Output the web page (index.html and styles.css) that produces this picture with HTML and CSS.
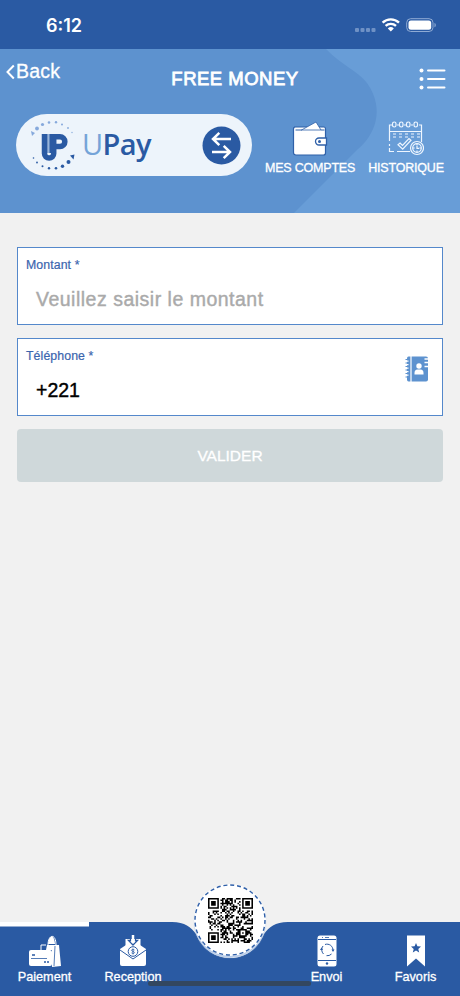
FILE: index.html
```html
<!DOCTYPE html>
<html lang="fr">
<head>
    <meta charset="UTF-8">
    <meta name="viewport" content="width=device-width, initial-scale=1.0">
    <title>Free Money</title>
    <link rel="stylesheet" href="styles.css">
</head>
<body>
    <div class="app">
        <!-- Status bar -->
        <div class="status-bar">
            <span class="time">6:12</span>
            <svg class="status-icons" width="84" height="18" viewBox="0 0 84 18">
                <g fill="#6f91c5">
                    <rect x="1" y="12" width="4" height="4" rx="1"/>
                    <rect x="6.500" y="12" width="4" height="4" rx="1"/>
                    <rect x="12" y="12" width="4" height="4" rx="1"/>
                    <rect x="17.500" y="12" width="4" height="4" rx="1"/>
                </g>
                <g fill="none" stroke="#fff" stroke-width="2.400">
                    <path d="M28.600 6.600a12 12 0 0 1 16.400 0"/>
                    <path d="M31.600 9.900a7.700 7.700 0 0 1 10.400 0"/>
                </g>
                <path d="M33.800 12.400a4.500 4.500 0 0 1 6 0l-3 3.200z" fill="#fff"/>
                <rect x="52.700" y="2.700" width="26.300" height="12.800" rx="4" fill="none" stroke="#8fabd4"/>
                <rect x="54.500" y="4.500" width="22.700" height="9.200" rx="2.500" fill="#fff"/>
                <path d="M80.500 7v4.300c1.700-.6 1.700-3.700 0-4.300z" fill="#8fabd4"/>
            </svg>
        </div>

        <!-- Header -->
        <header class="header">
            <svg class="header-shape" width="460" height="164" viewBox="0 0 460 164">
                <path d="M326 0C340 15 358 22 367 34C386 61 374 87 358 100L294 164H460V0z" fill="#689dd7"/>
            </svg>
            <div class="title-row">
                <a class="back">
                    <svg width="9" height="16" viewBox="0 0 9 16"><path d="M7.800 1.500L1.500 8l6.300 6.500" fill="none" stroke="#fff" stroke-width="2"/></svg>
                    <span>Back</span>
                </a>
                <h1>FREE MONEY</h1>
                <svg class="menu" width="28" height="22" viewBox="0 0 28 22">
                    <g fill="#fff"><circle cx="2.500" cy="2.500" r="2"/><circle cx="2.500" cy="11" r="2"/><circle cx="2.500" cy="19.500" r="2"/></g>
                    <path d="M9 2.500h16.500M9 11h16.500M9 19.500h16.500" stroke="#fff" stroke-width="2" stroke-linecap="round"/>
                </svg>
            </div>

            <div class="actions">
                <div class="wallet">
                    <svg class="logo" width="48" height="54" viewBox="0 0 48 54">
                        <g fill="#86a9dc">
                            <path d="M1 13l1 5 3-3z"/>
                            <circle cx="7" cy="10.500" r="1.900"/><circle cx="12.500" cy="6.500" r="1.600"/>
                            <circle cx="19" cy="4.500" r="1.300"/><circle cx="26" cy="4.300" r="1.200"/>
                            <circle cx="32" cy="6.500" r="1"/><circle cx="38" cy="10" r=".9"/><circle cx="42" cy="14.500" r=".7"/>
                        </g>
                        <g fill="#2a5aa3">
                            <path d="M44.500 36.500l-1 5-3.500-4z"/>
                            <circle cx="38.500" cy="44" r="2"/><circle cx="32.500" cy="48.200" r="1.700"/>
                            <circle cx="26" cy="50.200" r="1.300"/><circle cx="19" cy="50.200" r="1.200"/>
                            <circle cx="12.500" cy="48.200" r="1"/><circle cx="7" cy="44.500" r=".9"/><circle cx="3.500" cy="40" r=".8"/>
                        </g>
                        <path d="M14.500 16v19.500a4.600 4.600 0 0 0 9.200 0V18.800H30a4.700 4.700 0 0 1 0 9.700h-5" fill="none" stroke="#2a5aa3" stroke-width="5.500"/>
                        <path d="M17.500 16h6v19h-6z" fill="#2a5aa3"/>
                        <path d="M18.800 16v19" stroke="#b5cce9" stroke-width="1.200"/>
                    </svg>
                    <span class="brand"><span class="brand-u">U</span>Pay</span>
                    <svg class="swap" width="39" height="39" viewBox="0 0 39 39">
                        <circle cx="19.500" cy="19.500" r="19" fill="#2a5aa3"/>
                        <path d="M29 13H11.500M17.300 6.800L11 13l6.300 6.200M10 26h17.500M21.700 19.800L28 26l-6.300 6.200" fill="none" stroke="#fff" stroke-width="2.500"/>
                    </svg>
                </div>
                <div class="action accounts">
                    <svg width="36" height="36" viewBox="0 0 36 36">
                        <path d="M2 6h30q1.500 0 1.500 2v24q0 2-2 2H4q-2.500 0-2.500-2.500V8q0-2 2-2z" fill="#fff" stroke="#2f60a8" stroke-width="1.200"/>
                        <path d="M9.500 9L24 1l5 8z" fill="#fff" stroke="#2f60a8" stroke-width=".8"/>
                        <path d="M3.500 9h6.500M29 9h3.500" stroke="#2f60a8" stroke-width="1"/>
                        <path d="M34.500 17v7H27a3.500 3.500 0 0 1 0-7z" fill="#fff" stroke="#2f60a8" stroke-width="1.300"/>
                        <circle cx="27.500" cy="20.500" r="1.500" fill="#2f60a8"/>
                    </svg>
                    <span>MES COMPTES</span>
                </div>
                <div class="action history">
                    <svg width="36" height="36" viewBox="0 0 36 36" fill="none" stroke="#eef6ff" stroke-width="1.200">
                        <path d="M4 4H1.500v16M1.500 23v2M1.500 27v3.500H6M9 30.500h13M31 4h2.500v17M1.500 10.500h32M9 4h2M16 4h2M23 4h2"/>
                        <rect x="4.500" y="1" width="3.500" height="5" rx="1.700"/><rect x="11.500" y="1" width="3.500" height="5" rx="1.700"/>
                        <rect x="18.500" y="1" width="3.500" height="5" rx="1.700"/><rect x="26" y="1" width="3.500" height="5" rx="1.700"/>
                        <path d="M5 13h27M5 16h27" stroke-dasharray="3 3"/>
                        <path d="M12 22l2.500 2.500 6.500-7 2 1.700-8.300 9-4.700-4.500z"/>
                        <circle cx="29" cy="27" r="6.500" fill="#689dd7"/><circle cx="29" cy="27" r="4.300"/>
                        <path d="M29 22.500v2M29 29.500v2M24.700 27h2M31.300 27h2M29 25v2.300h2"/>
                    </svg>
                    <span>HISTORIQUE</span>
                </div>
            </div>
        </header>

        <!-- Form -->
        <main class="form">
            <div class="field">
                <label>Montant *</label>
                <div class="value placeholder">Veuillez saisir le montant</div>
            </div>
            <div class="field">
                <label>Téléphone *</label>
                <div class="value">+221</div>
                <svg class="contacts" width="24" height="26" viewBox="0 0 24 26">
                    <path d="M3.500.5H21q2 0 2 2v21q0 2-2 2H3.500q-1.500 0-1.500-2v-21q0-2 1.500-2z" fill="#5d92cf"/>
                    <path d="M6 0v26" stroke="#fff" stroke-width="1.200"/>
                    <path d="M.5 3.500H3M.5 7H3M.5 10.500H3M.5 14H3M.5 17.500H3M.5 21H3" stroke="#5d92cf" stroke-width="1.200"/>
                    <path d="M1.500 5.200h2M1.500 8.700h2M1.500 12.200h2M1.500 15.700h2M1.500 19.200h2" stroke="#fff" stroke-width="1.200"/>
                    <circle cx="14" cy="10" r="2.700" fill="#fff"/>
                    <path d="M9.500 18.500v-1.500q0-3.500 3-3.500h3q3 0 3 3.500v1.500z" fill="#fff"/>
                    <path d="M19.500 3h4.500M19.500 6.500h4.500M19.500 10.500h4.500" stroke="#fff" stroke-width="1.300"/>
                </svg>
            </div>
            <button class="submit" disabled>VALIDER</button>
        </main>

        <!-- Bottom tabs -->
        <nav class="tabs">
            <svg class="tabs-bg" width="460" height="74" viewBox="0 0 460 74">
                <path d="M0 0H172C185 0 191 5 196 12C209 44 251 44 264 12C269 5 275 0 288 0H460V74H0z" fill="#2a5aa3"/>
                <path d="M0 0h89v4.500H0z" fill="#fff"/>
            </svg>
            <div class="tab">
                <svg width="34" height="32" viewBox="0 0 34 32">
                    <path d="M13 15v-5h5M20 10c0-11 8-12 8 0" fill="none" stroke="#fff" stroke-width="1"/>
                    <path d="M20 9c1-9 6-11 7 0z" fill="#fff"/>
                    <path d="M19 10h12l2 21-9 1V15h-6z" fill="#fff"/>
                    <path d="M27 11l-1 20" stroke="#2a5aa3" stroke-width=".8"/>
                    <rect x="1" y="15" width="23" height="16" rx="2" fill="#fff"/>
                    <path d="M4 20h3M16 27h2M19 27h2" stroke="#2a5aa3" stroke-width="1.700"/>
                    <path d="M3 23.500h16" stroke="#2a5aa3" stroke-width=".8"/>
                </svg>
                <span>Paiement</span>
            </div>
            <div class="tab">
                <svg width="28" height="32" viewBox="0 0 28 32">
                    <path d="M1 14l6-4h14l6 4v15q0 2-2 2H3q-2 0-2-2z" fill="#fff"/>
                    <path d="M6.500 4h15v18h-15z" fill="#fff"/>
                    <path d="M1 15l13 9 13-9" fill="none" stroke="#2a5aa3" stroke-width="1"/>
                    <circle cx="14" cy="16.500" r="4.800" fill="#fff" stroke="#2a5aa3"/>
                    <path d="M15.500 15q-3-1.500-3 .2c0 1.500 3 1 3 2.500q0 1.500-3 .2M14 13.500v6" fill="none" stroke="#2a5aa3" stroke-width=".8"/>
                    <path d="M11.500 3.500v2h-2L14 10l4.500-4.500h-2v-2" fill="none" stroke="#2a5aa3" stroke-width="1.300"/>
                    <path d="M14 0v8" fill="none" stroke="#fff" stroke-width="2.500"/>
                </svg>
                <span>Reception</span>
            </div>
            <div class="tab-gap"></div>
            <div class="tab">
                <svg width="20" height="32" viewBox="0 0 20 32">
                    <rect x=".5" y=".5" width="19" height="31" rx="2.500" fill="#fff"/>
                    <path d="M1 4.500h18M1 25.500h18" stroke="#2a5aa3" stroke-width="1"/>
                    <path d="M5 2.500h1M8 2.500h4" stroke="#2a5aa3" stroke-width=".8"/>
                    <path d="M8 9.500a6 6 0 0 1 8 6M14.500 19a6 6 0 0 1-5 1.700M6.500 19a6 6 0 0 1-.5-8" fill="none" stroke="#2a5aa3" stroke-width="1"/>
                    <path d="M14.500 14.500h3L16 17zM3 15h3l-1.500-2.500z" fill="#2a5aa3"/>
                    <circle cx="10" cy="28.500" r="1.200" fill="#2a5aa3"/>
                </svg>
                <span>Envoi</span>
            </div>
            <div class="tab">
                <svg width="18" height="32" viewBox="0 0 18 32">
                    <path d="M0 .5h18v31l-9-8-9 8z" fill="#fff"/>
                    <path d="M9 8l1.400 3.300 3.600.3-2.700 2.300.9 3.600L9 15.600l-3.200 1.900.9-3.600L4 11.600l3.600-.3z" fill="#2a5aa3"/>
                </svg>
                <span>Favoris</span>
            </div>
            <div class="qr-button">
                <svg class="qr-ring" width="72" height="72" viewBox="0 0 72 72">
                    <circle cx="36" cy="36" r="35" fill="none" stroke="#2f5fa8" stroke-width="1.400" stroke-dasharray="4 2.871"/>
                </svg>
                <svg id="qr" width="45" height="45" viewBox="0 0 29 29"></svg>
            </div>
            <div class="home-bar"></div>
        </nav>
    </div>

    <script src="script.js"></script>
</body>
</html>
```

FILE: styles.css
```css
/* General Styles */
* {
    box-sizing: border-box;
}
body {
    margin: 0;
    font-family: 'Liberation Sans', Arial, sans-serif;
    background: #f1f1f1;
    overflow: hidden;
}
svg {
    display: block;
    flex-shrink: 0;
}
.app {
    width: 460px;
    height: 996px;
    display: flex;
    flex-direction: column;
}

/* Status bar */
.status-bar {
    height: 49px;
    background: #2a5aa3;
    display: flex;
    justify-content: space-between;
    padding: 15px 22px 0 46px;
    color: #fff;
}
.time {
    font-family: Inter, sans-serif;
    font-size: 18px;
    font-weight: 600;
    line-height: 22px;
}
.status-icons {
    margin-top: 1px;
}

/* Header */
.header {
    position: relative;
    height: 164px;
    background: #5d92cf;
    color: #fff;
}
.header-shape {
    position: absolute;
    top: 0;
    left: 0;
}
.title-row {
    position: relative;
    display: grid;
    grid-template-columns: 130px 1fr 113px;
    height: 65px;
    padding: 0 13px 0 6px;
}
.back {
    display: flex;
    align-items: center;
    height: 23px;
    margin-top: 11px;
    font-size: 19.5px;
    letter-spacing: 0.2px;
    -webkit-text-stroke: 0.3px #fff;
}
.back span {
    margin-left: 1px;
}
h1 {
    margin: 18px 0 0;
    font-size: 18.5px;
    font-weight: normal;
    line-height: 23px;
    letter-spacing: 0.5px;
    text-align: center;
    white-space: nowrap;
    -webkit-text-stroke: 0.8px #fff;
}
.menu {
    justify-self: end;
    margin-top: 19px;
}
.actions {
    position: relative;
    display: flex;
    padding-left: 16px;
}
.wallet {
    display: flex;
    align-items: center;
    width: 236px;
    height: 62px;
    border-radius: 31px;
    background: #edf4fb;
    padding: 0 11px 0 14px;
}
.brand {
    font-family: 'Open Sans', sans-serif;
    font-size: 29px;
    font-weight: 600;
    line-height: 40px;
    letter-spacing: -0.6px;
    color: #2a5aa3;
    margin: -2px 0 0 4px;
}
.brand-u {
    font-weight: 400;
    color: #75a4d8;
}
.swap {
    margin-left: auto;
}
.action {
    display: flex;
    flex-direction: column;
    align-items: center;
    gap: 4px;
    padding-top: 7px;
    font-size: 12.5px;
    line-height: 15px;
    letter-spacing: -0.2px;
    white-space: nowrap;
    -webkit-text-stroke: 0.3px #fff;
}
.accounts {
    width: 90px;
    margin-left: 13px;
}
.history {
    width: 76px;
    margin-left: 13px;
}

/* Form */
.form {
    flex: 1;
    display: flex;
    flex-direction: column;
    gap: 13px;
    padding: 34px 17px 0;
}
.field {
    position: relative;
    height: 78px;
    background: #fff;
    border: 1px solid #5488cb;
    padding: 9px 8px 0;
}
.field label {
    display: block;
    font-size: 12.3px;
    line-height: 16px;
    letter-spacing: 0.1px;
    color: #3a65ae;
    -webkit-text-stroke: 0.2px #3a65ae;
}
.value {
    margin: 14px 0 0 10px;
    font-size: 19.5px;
    line-height: 24px;
    color: #000;
    -webkit-text-stroke: 0.4px;
}
.placeholder {
    color: #aaa;
    letter-spacing: 0.5px;
}
.contacts {
    position: absolute;
    top: 17px;
    right: 13px;
}
.submit {
    height: 53px;
    border: none;
    border-radius: 4px;
    background: #cfd8da;
    color: #fff;
    font-family: inherit;
    font-size: 15.5px;
    -webkit-text-stroke: 0.3px #fff;
}

/* Bottom tabs */
.tabs {
    position: relative;
    height: 74px;
    display: grid;
    grid-template-columns: 89px 88px 105px 89px 89px;
    color: #fff;
}
.tabs-bg {
    position: absolute;
    top: 0;
    left: 0;
}
.tab {
    position: relative;
    display: flex;
    flex-direction: column;
    align-items: center;
    padding-top: 13px;
    gap: 3px;
    font-size: 12.7px;
    line-height: 15px;
    -webkit-text-stroke: 0.3px #fff;
}
.qr-button {
    position: absolute;
    top: -38px;
    left: 194px;
    width: 72px;
    height: 72px;
    display: flex;
    align-items: center;
    justify-content: center;
    border-radius: 50%;
    background: #fff;
    box-shadow: 0 2px 1px #b9cde9;
}
.qr-ring {
    position: absolute;
    top: 0;
    left: 0;
}
.home-bar {
    position: absolute;
    top: 59px;
    left: 148px;
    width: 163px;
    height: 5px;
    border-radius: 3px;
    background: #33475f;
}
```

FILE: script.js
```js
// Draws the QR code, version 3 (29 x 29 modules)
const qr = document.getElementById('qr');
const size = 29;
let seed = 221;

function random() {
    seed = (seed * 48271) % 2147483647;
    return seed / 2147483647;
}

function ring(x, y, cx, cy) {
    return Math.max(Math.abs(x - cx), Math.abs(y - cy));
}

function isDark(x, y) {
    const corners = [[3, 3], [25, 3], [3, 25]];
    for (const [cx, cy] of corners) {
        const d = ring(x, y, cx, cy);
        if (d <= 4) return d !== 2 && d !== 4;
    }
    const a = ring(x, y, 22, 22);
    if (a <= 2) return a !== 1;
    if (x === 6) return y % 2 === 0;
    if (y === 6) return x % 2 === 0;
    return random() > 0.5;
}

let d = '';
for (let y = 0; y < size; y++) {
    for (let x = 0; x < size; x++) {
        if (isDark(x, y)) d += `M${x} ${y}h1v1h-1z`;
    }
}
qr.innerHTML = `<path d="${d}" fill="#000"/>`;
```
